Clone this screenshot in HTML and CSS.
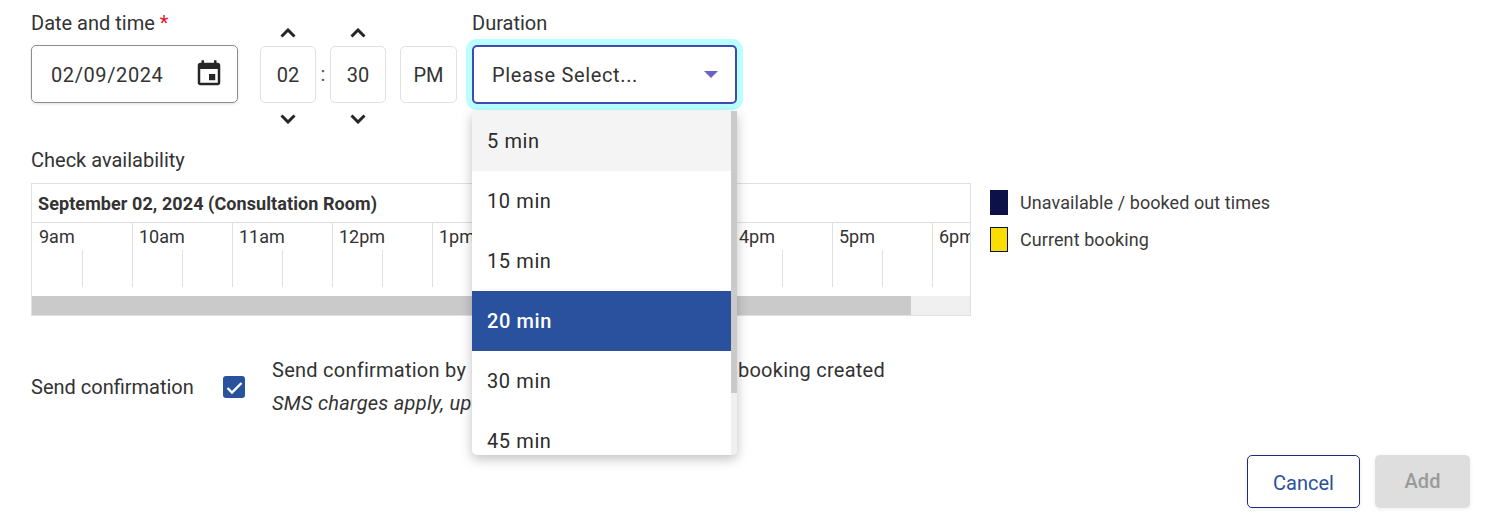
FILE: index.html
```html
<!DOCTYPE html>
<html lang="en">
  <head>
    <meta charset="UTF-8" />
    <title>Add booking</title>
    <link rel="stylesheet" href="styles.css">
  </head>
  <body>
    <form class="booking-form">
      <div class="top-row">
        <div class="date-field">
          <label class="field-label">Date and time <span class="required">*</span></label>
          <div class="date-input">
            <span>02/09/2024</span>
            <svg class="calendar-icon" viewBox="0 0 24 24"><path d="M17 12h-5v5h5v-5zM16 1v2H8V1H6v2H5c-1.110 0-1.990.9-1.990 2L3 19c0 1.100.89 2 2 2h14c1.100 0 2-.9 2-2V5c0-1.100-.9-2-2-2h-1V1h-2zm3 18H5V8h14v11z"/></svg>
          </div>
        </div>

        <div class="time-group">
          <div class="spinner">
            <svg class="chevron chevron-up" viewBox="0 0 16 10"><path d="M1.500 8.500L8 2l6.500 6.500"/></svg>
            <div class="time-box">02</div>
            <svg class="chevron chevron-down" viewBox="0 0 16 10"><path d="M1.500 1.500L8 8l6.500-6.500"/></svg>
          </div>
          <span class="colon">:</span>
          <div class="spinner">
            <svg class="chevron chevron-up" viewBox="0 0 16 10"><path d="M1.500 8.500L8 2l6.500 6.500"/></svg>
            <div class="time-box">30</div>
            <svg class="chevron chevron-down" viewBox="0 0 16 10"><path d="M1.500 1.500L8 8l6.500-6.500"/></svg>
          </div>
          <div class="time-box meridiem">PM</div>
        </div>

        <div class="duration-field">
          <label class="field-label">Duration</label>
          <div class="select-box">
            <span>Please Select...</span>
            <span class="select-caret"></span>
          </div>
          <div class="dropdown">
            <ul class="dropdown-list">
              <li class="hovered">5 min</li>
              <li>10 min</li>
              <li>15 min</li>
              <li class="selected">20 min</li>
              <li>30 min</li>
              <li>45 min</li>
            </ul>
            <div class="dropdown-scrollbar"><div class="dropdown-thumb"></div></div>
          </div>
        </div>
      </div>

      <label class="field-label availability-label">Check availability</label>
      <div class="availability-row">
        <div class="timeline">
          <div class="timeline-title">September 02, 2024 (Consultation Room)</div>
          <div class="timeline-hours">
            <div class="hour"><span>9am</span></div>
            <div class="hour"><span>10am</span></div>
            <div class="hour"><span>11am</span></div>
            <div class="hour"><span>12pm</span></div>
            <div class="hour"><span>1pm</span></div>
            <div class="hour"><span>2pm</span></div>
            <div class="hour"><span>3pm</span></div>
            <div class="hour"><span>4pm</span></div>
            <div class="hour"><span>5pm</span></div>
            <div class="hour"><span>6pm</span></div>
          </div>
          <div class="timeline-scrollbar"><div class="timeline-thumb"></div></div>
        </div>
        <div class="legend">
          <div class="legend-item"><span class="swatch swatch-booked"></span>Unavailable / booked out times</div>
          <div class="legend-item"><span class="swatch swatch-current"></span>Current booking</div>
        </div>
      </div>

      <div class="confirm-row">
        <span class="confirm-label">Send confirmation</span>
        <span class="checkbox">
          <svg viewBox="0 0 22 22"><path d="M4.500 12l4.500 4.500L18.500 7"/></svg>
        </span>
        <div class="confirm-text">
          <div>Send confirmation by email and text to client when booking created</div>
          <em>SMS charges apply, up to 2 credits</em>
        </div>
      </div>

      <div class="actions">
        <button type="button" class="btn btn-cancel">Cancel</button>
        <button type="button" class="btn btn-add" disabled>Add</button>
      </div>
    </form>
  </body>
</html>
```

FILE: styles.css
```css
html,
body {
  margin: 0;
  height: 100%;
  background-color: #fff;
  overflow: hidden;
}

body {
  font-family: Roboto, Arial, sans-serif;
  font-size: 20px;
  color: #333;
}

.booking-form {
  padding: 12px 17px 0 31px;
}

.field-label {
  display: block;
  line-height: 22px;
}

.required {
  color: #e8112d;
}

.top-row {
  display: flex;
  align-items: flex-start;
}

.date-field {
  width: 207px;
}

.date-input {
  display: flex;
  align-items: center;
  justify-content: space-between;
  box-sizing: border-box;
  height: 58px;
  margin-top: 11px;
  padding: 1px 13px 0 19px;
  border: 1px solid #8c8c8c;
  border-radius: 5px;
  box-shadow: 0 1px 3px rgba(0, 0, 0, 0.12);
  letter-spacing: 0.6px;
}

.calendar-icon {
  width: 30px;
  height: 30px;
  margin-top: -2px;
  fill: #262626;
}

.time-group {
  display: flex;
  align-items: flex-start;
  margin-left: 22px;
  padding-top: 16px;
}

.spinner {
  display: flex;
  flex-direction: column;
  align-items: center;
}

.chevron {
  width: 16px;
  height: 10px;
  fill: none;
  stroke: #262626;
  stroke-width: 3;
}

.chevron-up {
  margin-bottom: 8px;
}

.chevron-down {
  margin-top: 11px;
}

.time-box {
  display: flex;
  align-items: center;
  justify-content: center;
  box-sizing: border-box;
  width: 56px;
  height: 57px;
  border: 1px solid #e2e2e2;
  border-radius: 5px;
}

.colon {
  width: 14px;
  margin-top: 18px;
  line-height: 57px;
  text-align: center;
  color: #555;
}

.meridiem {
  width: 57px;
  margin: 18px 15px 0 14px;
}

.duration-field {
  position: relative;
  width: 265px;
}

.select-box {
  display: flex;
  align-items: center;
  justify-content: space-between;
  box-sizing: border-box;
  height: 59px;
  margin-top: 11px;
  padding: 0 17px 0 18px;
  border: 2px solid #4149b5;
  border-radius: 5px;
  box-shadow: 0 0 0 6px #b9ffff;
  letter-spacing: 0.65px;
}

.select-caret {
  width: 0;
  height: 0;
  border-left: 7px solid transparent;
  border-right: 7px solid transparent;
  border-top: 7px solid #6a62c4;
}

.dropdown {
  position: absolute;
  top: 99px;
  left: 0;
  z-index: 10;
  display: flex;
  width: 265px;
  height: 344px;
  overflow: hidden;
  background-color: #fff;
  border-radius: 0 0 5px 5px;
  box-shadow: 0 4px 12px rgba(0, 0, 0, 0.25);
}

.dropdown-list {
  flex: 1;
  margin: 0;
  padding: 0;
  list-style: none;
  color: #2b2b2b;
}

.dropdown-list li {
  height: 60px;
  padding-left: 15px;
  line-height: 61px;
  letter-spacing: 0.6px;
}

.dropdown-list .hovered {
  background-color: #f4f4f4;
}

.dropdown-list .selected {
  background-color: #2a519d;
  color: #fff;
  font-weight: 500;
}

.dropdown-scrollbar {
  width: 6px;
  background-color: #f0f0f0;
}

.dropdown-thumb {
  height: 282px;
  background-color: #cacaca;
}

.availability-label {
  margin-top: 25px;
}

.availability-row {
  display: flex;
  align-items: flex-start;
  margin-top: 12px;
}

.timeline {
  box-sizing: border-box;
  width: 940px;
  height: 133px;
  overflow: hidden;
  border: 1px solid #e0e0e0;
}

.timeline-title {
  height: 38px;
  padding-left: 6px;
  line-height: 40px;
  font-size: 18px;
  font-weight: 700;
  letter-spacing: 0.08px;
  border-bottom: 1px solid #e0e0e0;
}

.timeline-hours {
  display: flex;
  height: 73px;
}

.hour {
  position: relative;
  flex: 0 0 100px;
  box-sizing: border-box;
  height: 64px;
  padding: 4px 0 0 6px;
  border-left: 1px solid #e0e0e0;
  font-size: 18px;
  line-height: 20px;
}

.hour:first-child {
  padding-left: 7px;
  border-left: 0;
}

/* half hour tick */
.hour::after {
  content: "";
  position: absolute;
  left: 49px;
  top: 27px;
  bottom: 0;
  border-left: 1px solid #e0e0e0;
}

.hour:first-child::after {
  left: 50px;
}

.timeline-scrollbar {
  height: 19px;
  background-color: #f0f0f0;
}

.timeline-thumb {
  width: 879px;
  height: 100%;
  background-color: #cacaca;
}

.legend {
  margin: 7px 0 0 19px;
  font-size: 18px;
  letter-spacing: 0.08px;
  color: #3a3a3a;
}

.legend-item {
  display: flex;
  align-items: center;
  gap: 12px;
  margin-bottom: 12px;
}

.swatch {
  box-sizing: border-box;
  width: 18px;
  height: 25px;
  border: 1px solid #0c1248;
}

.swatch-booked {
  background-color: #0c1248;
}

.swatch-current {
  background-color: #f9dc00;
}

.confirm-row {
  display: flex;
  align-items: center;
  margin-top: 38px;
}

.confirm-label {
  width: 192px;
}

.checkbox {
  display: flex;
  width: 22px;
  height: 22px;
  border-radius: 3px;
  background-color: #2a519d;
}

.checkbox svg {
  fill: none;
  stroke: #fff;
  stroke-width: 2.4;
}

.confirm-text {
  margin-left: 27px;
  line-height: 33px;
  letter-spacing: 0.25px;
  white-space: nowrap;
}

.actions {
  display: flex;
  justify-content: flex-end;
  gap: 15px;
  margin-top: 35px;
}

.btn {
  height: 53px;
  border-radius: 5px;
  font-family: inherit;
  font-size: 20px;
}

.btn-cancel {
  width: 113px;
  padding-top: 3px;
  border: 1px solid #1c2a80;
  background-color: #fff;
  color: #2a519d;
  box-shadow: 0 1px 4px rgba(0, 0, 0, 0.08);
}

.btn-add {
  width: 95px;
  padding-bottom: 3px;
  border: 0;
  background-color: #dedede;
  color: #9a9a9a;
  font-weight: 500;
  box-shadow: 0 1px 4px rgba(0, 0, 0, 0.08);
}
```
